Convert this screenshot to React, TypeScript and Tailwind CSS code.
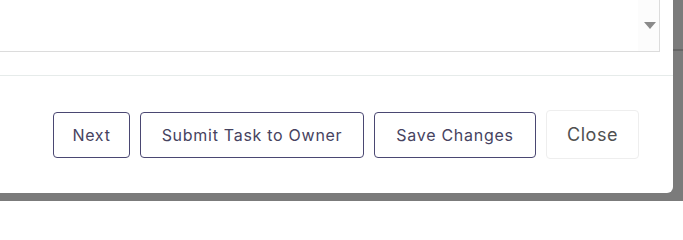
export default function App() {
  const btn =
    "h-[46px] rounded-[4px] border border-[#4a4772] bg-white text-[16px] tracking-[0.045em] text-[#46435f] flex items-center justify-center";
  return (
    <div
      className="w-[683px] h-[201px] bg-[#7b7b7b] flex overflow-hidden relative"
      style={{ fontFamily: "Inter, 'Open Sans', sans-serif" }}
    >
      <div className="w-[673px] h-[193px] bg-white rounded-br-[6px] flex flex-col shrink-0">
        <div className="w-[660px] h-[52px] border-b border-r border-[#dcdcdc] flex justify-end shrink-0">
          <div className="w-[21px] h-full bg-[#fcfcfc] flex items-center justify-center pl-[2px]">
            <svg width="12" height="7" viewBox="0 0 12 7">
              <path d="M0 0 H12 L6 7 Z" fill="#8a8a8a" />
            </svg>
          </div>
        </div>
        <div className="h-[23px] shrink-0" />
        <div className="w-full border-t border-[#e6ebea]" />
        <div className="flex items-center justify-end gap-[10px] pr-[34px] pt-[34px]">
          <button className={`${btn} w-[77px]`}>Next</button>
          <button className={`${btn} w-[224px]`}>Submit Task to Owner</button>
          <button className={`${btn} w-[162px]`}>Save Changes</button>
          <button className="h-[49px] w-[93px] rounded-[4px] border border-[#eeeeee] bg-white text-[18px] tracking-[0.03em] text-[#505050] flex items-center justify-center">
            Close
          </button>
        </div>
      </div>
      <div className="absolute right-0 top-[49px] w-[10px] h-[2px] bg-[#666666]" />
    </div>
  );
}
